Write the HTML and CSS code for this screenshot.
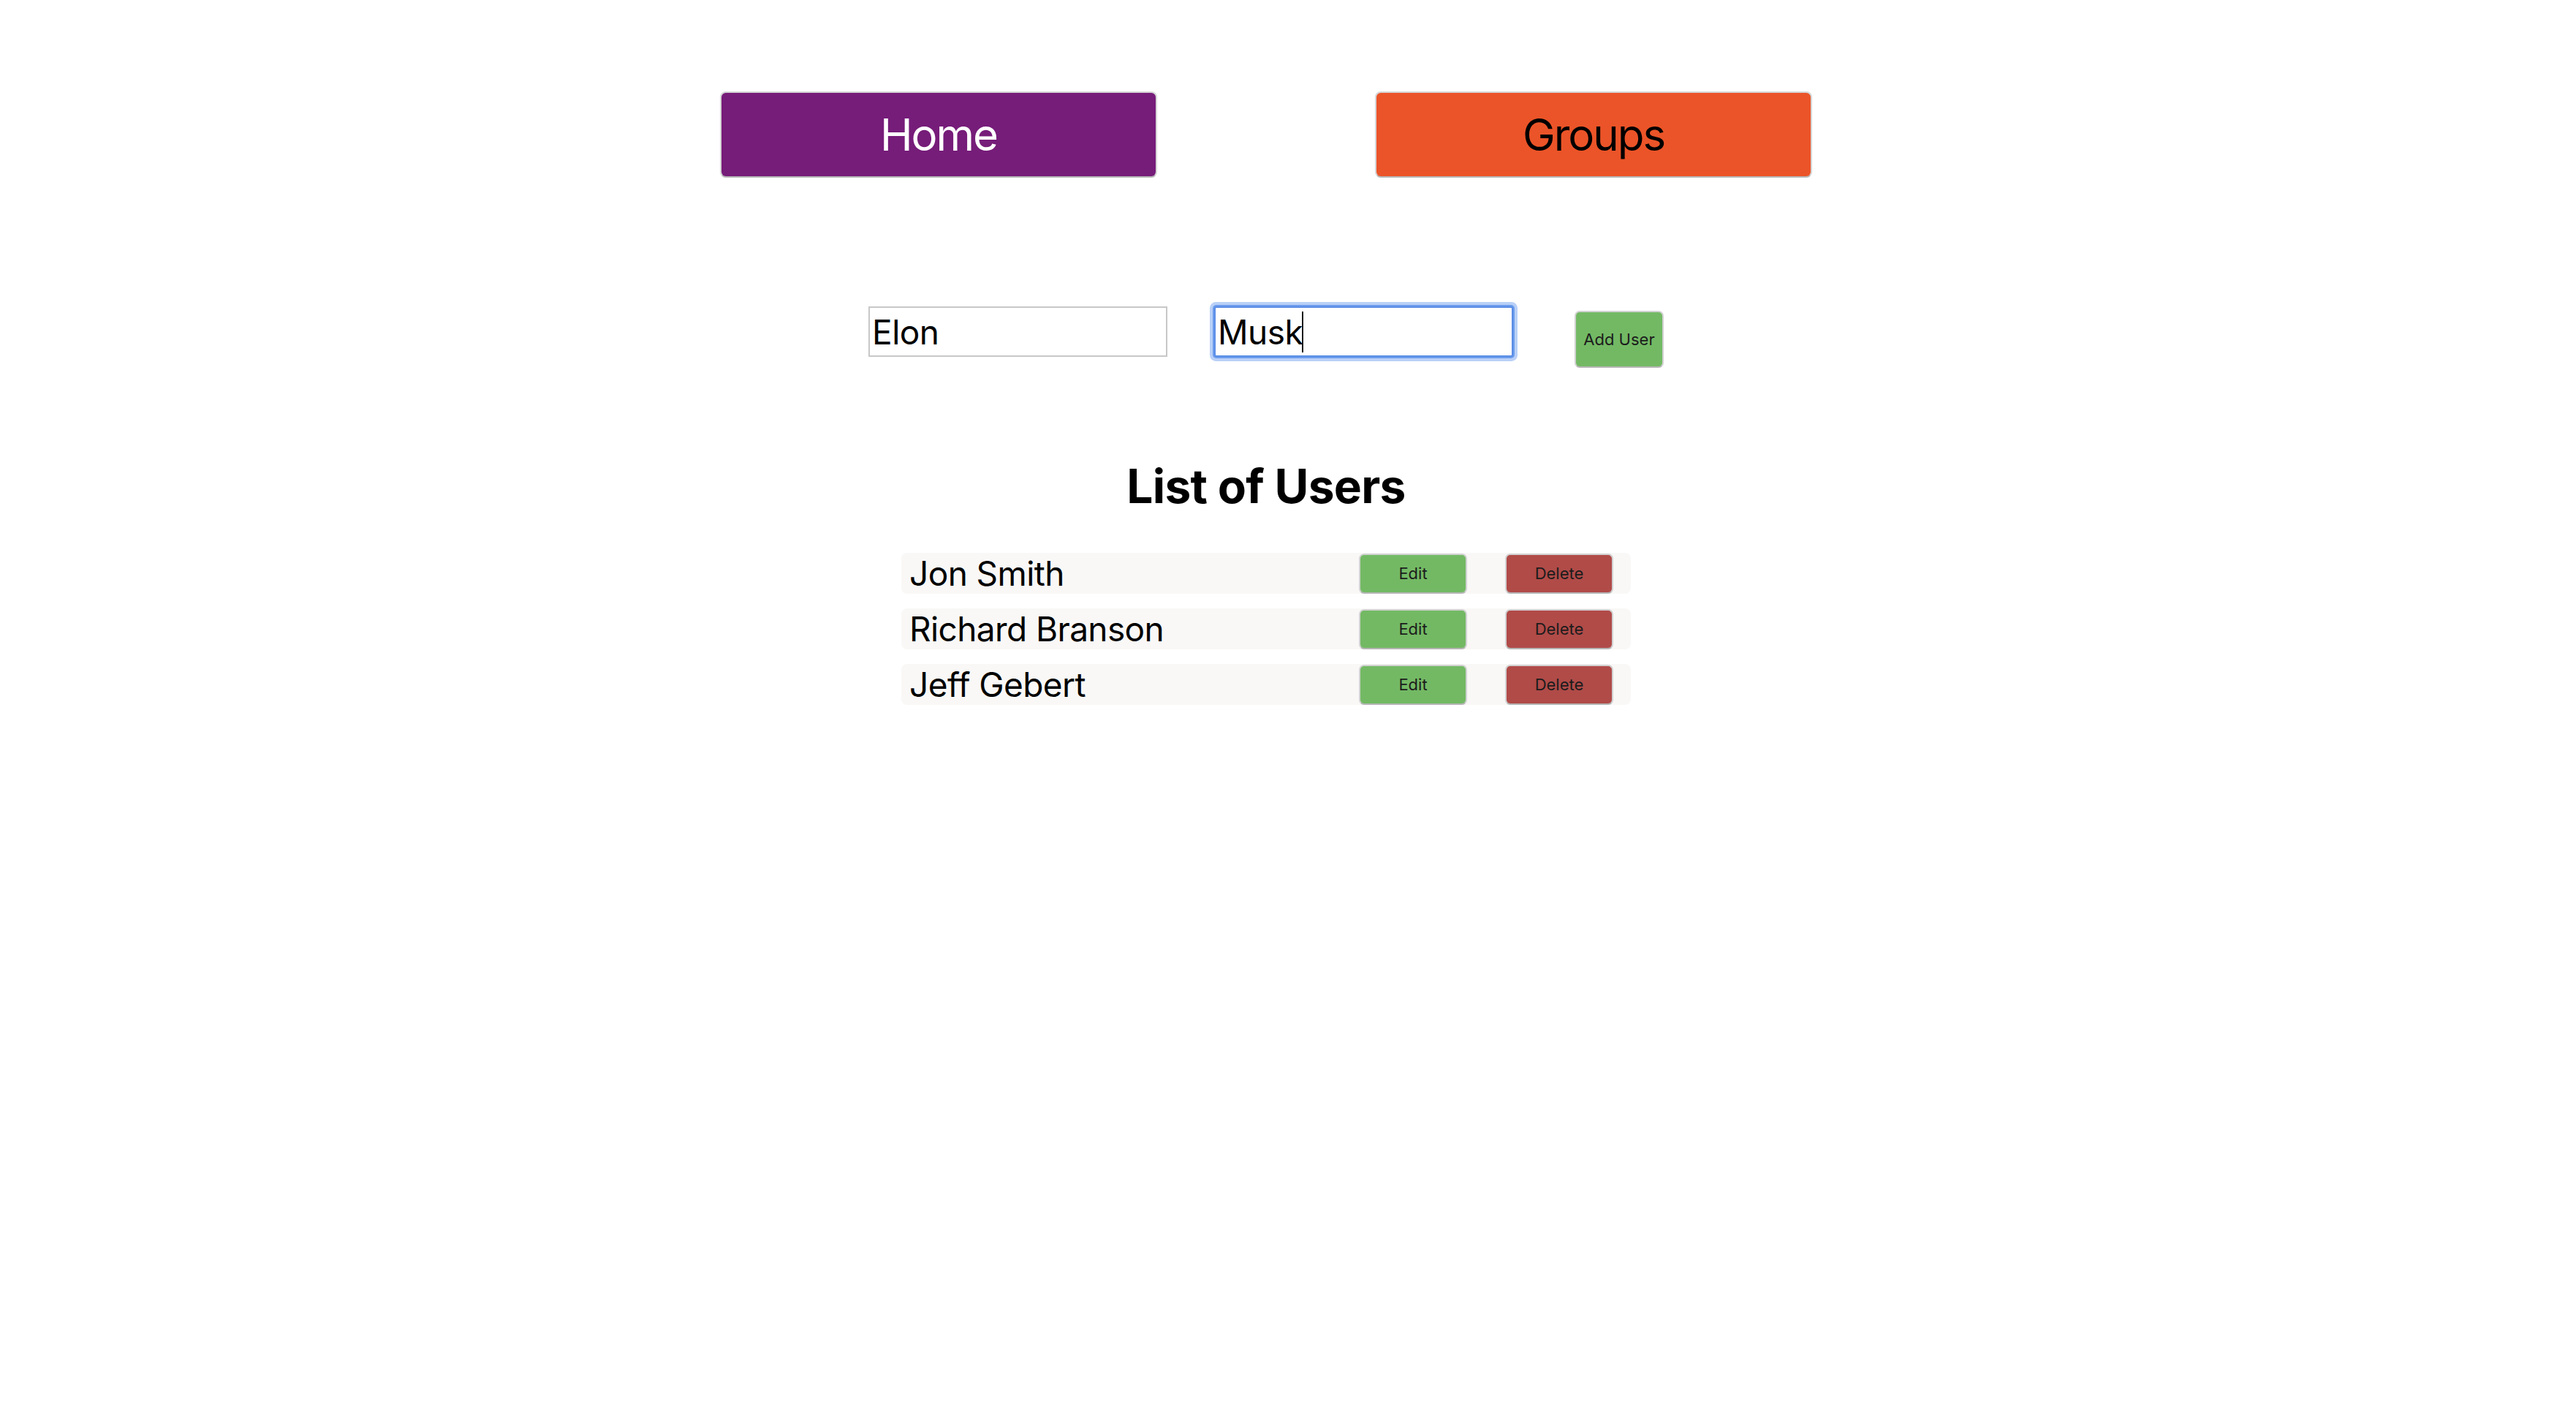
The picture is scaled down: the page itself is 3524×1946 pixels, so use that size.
FILE: index.html
```html
<!DOCTYPE html>
<html lang="en">
<head>
<meta charset="utf-8">
<title>Users</title>
<link rel="stylesheet" href="styles.css">
</head>
<body>
<div class="page">
  <nav class="nav">
    <button class="nav-btn nav-home">Home</button>
    <button class="nav-btn nav-groups">Groups</button>
  </nav>

  <form class="add-form">
    <input class="field-input" type="text" value="Elon">
    <div class="field">
      <input class="field-input field-focused" type="text" value="Musk">
      <span class="caret"></span>
    </div>
    <button type="button" class="btn btn-add">Add User</button>
  </form>

  <h1 class="title">List of Users</h1>

  <ul class="user-list">
    <li class="user-row">
      <span class="user-name">Jon Smith</span>
      <button class="btn btn-edit">Edit</button>
      <button class="btn btn-delete">Delete</button>
    </li>
    <li class="user-row">
      <span class="user-name">Richard Branson</span>
      <button class="btn btn-edit">Edit</button>
      <button class="btn btn-delete">Delete</button>
    </li>
    <li class="user-row">
      <span class="user-name">Jeff Gebert</span>
      <button class="btn btn-edit">Edit</button>
      <button class="btn btn-delete">Delete</button>
    </li>
  </ul>
</div>
</body>
</html>
```

FILE: styles.css
```css
html, body {
  margin: 0;
  padding: 0;
  background: #ffffff;
}

body {
  font-family: Inter, "Noto Sans", "Liberation Sans", sans-serif;
  color: #000;
}

.page {
  padding: 0 60px 0 0;
}

.nav {
  display: flex;
  justify-content: center;
  gap: 298px;
  padding-top: 125px;
}

.nav-btn {
  box-sizing: border-box;
  width: 598px;
  height: 118px;
  border: 2px solid #d6d6d6;
  border-bottom-color: #b8b8b8;
  border-radius: 8px;
  font-family: inherit;
  font-size: 60px;
  font-weight: 400;
  letter-spacing: -2px;
  padding: 0;
  cursor: pointer;
}

.nav-home {
  background: #761c79;
  color: #ffffff;
}

.nav-groups {
  background: #eb5428;
  color: #000000;
}

.add-form {
  display: flex;
  justify-content: center;
  align-items: flex-start;
  gap: 64px;
  margin: 176px 0 0 0;
}

.field {
  position: relative;
}

.field-input {
  box-sizing: border-box;
  width: 409px;
  height: 69px;
  border: 2px solid #c8c8c8;
  padding: 0 3px;
  margin: 0;
  font-family: inherit;
  font-size: 46px;
  letter-spacing: -0.5px;
  color: #000;
  background: #fff;
  outline: none;
}

.field-focused {
  border-color: #5a8de6;
  box-shadow: 0 0 0 2px #6c9cec, 0 0 0 6px #b9d0f7;
  border-radius: 3px;
}

.caret {
  position: absolute;
  left: 120px;
  top: 7px;
  width: 2px;
  height: 56px;
  background: #1a1a1a;
}

.btn {
  box-sizing: border-box;
  font-family: inherit;
  font-size: 22px;
  color: #1c1c1c;
  border: 2px solid #d2d2d2;
  border-bottom-color: #b6b6b6;
  border-radius: 7px;
  padding: 0;
  cursor: pointer;
}

.btn-add {
  width: 122px;
  height: 78px;
  margin: 6px 0 0 20px;
  background: #73b964;
}

.title {
  margin: 130px 0 0 0;
  text-align: center;
  font-size: 64px;
  line-height: 64px;
  font-weight: 700;
  letter-spacing: -0.7px;
}

.user-list {
  list-style: none;
  width: 998px;
  margin: 59px auto 0 auto;
  padding: 0;
  display: flex;
  flex-direction: column;
  gap: 20px;
}

.user-row {
  box-sizing: border-box;
  height: 56px;
  display: flex;
  align-items: center;
  gap: 52px;
  padding: 0 24px 0 11px;
  background: #f9f8f7;
  border-radius: 8px;
}

.user-name {
  flex: 1;
  font-size: 46px;
  letter-spacing: -0.6px;
}

.btn-edit,
.btn-delete {
  width: 148px;
  height: 55px;
}

.btn-edit {
  background: #73b964;
}

.btn-delete {
  background: #b04b48;
}
```
